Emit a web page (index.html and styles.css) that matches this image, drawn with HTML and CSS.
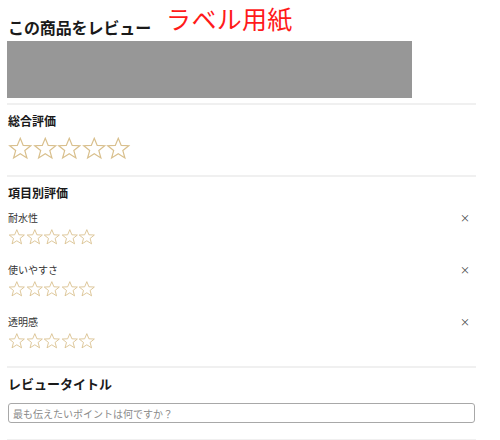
FILE: index.html
```html
<!DOCTYPE html>
<html lang="ja">
<head>
<meta charset="utf-8">
<link rel="stylesheet" href="styles.css">
</head>
<body>
<svg width="0" height="0" class="defs">
  <defs>
    <symbol id="star" viewBox="0 0 24 24">
      <polygon points="12,2 14.9,9 22.3,9.3 16.5,14 18.5,21.3 12,17.2 5.5,21.3 7.5,14 1.7,9.3 9.1,9" fill="none" stroke="#d9c08e" stroke-width="1.2" stroke-linejoin="miter"/>
    </symbol>
  </defs>
</svg>
<main class="page">
  <header class="header">
    <h1 class="title">この商品をレビュー</h1>
    <span class="label">ラベル用紙</span>
  </header>
  <div class="product"></div>
  <hr class="sep">
  <section class="overall">
    <h2 class="heading">総合評価</h2>
    <div class="stars big">
      <svg><use href="#star"/></svg><svg><use href="#star"/></svg><svg><use href="#star"/></svg><svg><use href="#star"/></svg><svg><use href="#star"/></svg>
    </div>
  </section>
  <hr class="sep">
  <section class="items">
    <h2 class="heading">項目別評価</h2>
    <div class="item">
      <div class="item-head"><span class="item-name">耐水性</span><span class="close">×</span></div>
      <div class="stars small">
        <svg><use href="#star"/></svg><svg><use href="#star"/></svg><svg><use href="#star"/></svg><svg><use href="#star"/></svg><svg><use href="#star"/></svg>
      </div>
    </div>
    <div class="item">
      <div class="item-head"><span class="item-name">使いやすさ</span><span class="close">×</span></div>
      <div class="stars small">
        <svg><use href="#star"/></svg><svg><use href="#star"/></svg><svg><use href="#star"/></svg><svg><use href="#star"/></svg><svg><use href="#star"/></svg>
      </div>
    </div>
    <div class="item">
      <div class="item-head"><span class="item-name">透明感</span><span class="close">×</span></div>
      <div class="stars small">
        <svg><use href="#star"/></svg><svg><use href="#star"/></svg><svg><use href="#star"/></svg><svg><use href="#star"/></svg><svg><use href="#star"/></svg>
      </div>
    </div>
  </section>
  <hr class="sep">
  <section class="review-title">
    <h2 class="heading large">レビュータイトル</h2>
    <input class="text-input" type="text" placeholder="最も伝えたいポイントは何ですか？">
  </section>
  <hr class="sep">
</main>
</body>
</html>
```

FILE: styles.css
```css
html, body {
  margin: 0;
  padding: 0;
  background: #fff;
}
body {
  font-family: "Noto Sans CJK JP", "Noto Sans", sans-serif;
  color: #222;
}
.defs {
  position: absolute;
  width: 0;
  height: 0;
}
.page {
  margin-left: 7px;
  width: 469px;
}
.header {
  display: flex;
  align-items: flex-start;
  height: 41px;
}
.title {
  margin: 17px 0 0 1px;
  font-size: 16px;
  line-height: 20px;
  font-weight: 700;
  color: #1a1a1a;
  letter-spacing: -0.1px;
}
.label {
  margin: 0 0 0 15px;
  font-size: 25px;
  line-height: 36px;
  color: #ff1a1a;
  letter-spacing: 0.3px;
}
.product {
  width: 405px;
  height: 57px;
  background: #979797;
}
.sep {
  margin: 5px 0 0;
  border: 0;
  height: 2px;
  background: #f0f0f0;
}
.overall {
  padding: 8px 0 14px 1px;
}
.heading {
  margin: 0;
  font-size: 12px;
  line-height: 16px;
  font-weight: 700;
  color: #1a1a1a;
}
.heading.large {
  font-size: 13px;
  line-height: 18px;
}
.stars {
  display: flex;
}
.stars svg {
  display: block;
  flex: none;
}
.stars.big {
  margin-top: 7px;
}
.stars.big svg {
  width: 24.5px;
  height: 25px;
}
.stars.small {
  margin-top: 3px;
}
.stars.small svg {
  width: 17.6px;
  height: 18px;
}
.overall + .sep,
.items + .sep,
.review-title + .sep {
  margin-top: 0;
}
.items {
  padding: 8px 0 0 1px;
}
.item {
  padding-bottom: 17px;
}
.items .heading + .item {
  margin-top: 10px;
}
.items .item:last-child {
  padding-bottom: 16px;
}
.item-head {
  display: flex;
  justify-content: space-between;
  align-items: center;
  height: 14px;
}
.item-name {
  font-size: 10px;
  line-height: 14px;
  color: #333;
}
.close {
  font-size: 10px;
  line-height: 14px;
  color: #444;
  margin-right: 6px;
}
.review-title {
  padding: 7px 0 16px 1px;
}
.text-input {
  display: block;
  box-sizing: border-box;
  margin-top: 10px;
  width: 467px;
  height: 20px;
  padding: 0 4px;
  border: 1px solid #a8a8a8;
  border-radius: 3px;
  font-family: "Noto Sans CJK JP", sans-serif;
  font-size: 10px;
  color: #333;
  outline: none;
}
.text-input::placeholder {
  color: #8a8a8a;
}
```
